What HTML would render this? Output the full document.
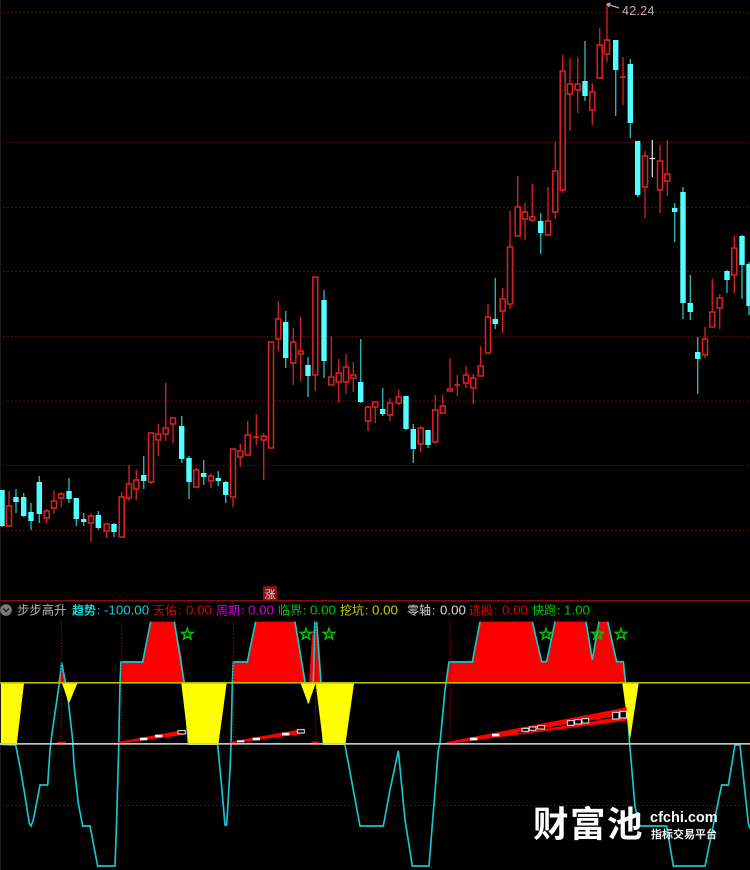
<!DOCTYPE html>
<html><head><meta charset="utf-8"><style>
html,body{margin:0;padding:0;background:#000}
svg{display:block}
text{font-family:"Liberation Sans","Noto Sans CJK SC",sans-serif}
</style></head><body>
<svg width="750" height="870" viewBox="0 0 750 870" xmlns="http://www.w3.org/2000/svg">
<rect width="750" height="870" fill="#000"/>
<rect width="1" height="870" fill="#1c1c1c"/>
<path d="M3 12.5H750M3 77.5H750M3 142.5H750M3 207.5H750M3 271.5H750M3 336.5H750M3 401H750M3 465.5H750M3 530.5H750" stroke="#760808" stroke-width="1.100" stroke-dasharray="1.700 2.300" fill="none"/>

<path fill="none" stroke="#cc2020" stroke-width="1.400" d="M9 491V527M46.7 509V523M54 490V514M61.3 492V507M91 513V542M106.7 523V538M121.7 492V537M129 465V501M136.3 470V500M151 433V484M158.3 424V456M165.7 383V441M173 418V443M196.3 468V487M211 473V488M233 449V507M240.3 444V467M247.7 421V455M256.3 414V445M263.7 433V480M271 342V448M278.3 301V351M293.3 328V385M300.7 317V381M315.3 277V391M331.3 336V385M338.7 359V403M346 354V394M353.3 362V392M368 406V431M375.3 402V423M390 398V421M398.7 390V405M420.7 426V452M435.3 395V444M442.7 395V413M450 358V391M457.3 375V396M466 366V388M473.3 374V404M480.7 346V376M488 304V353M502.7 288V333M510 211V309M517.7 176V236M525 203V240M532.3 184V222M548 187V235M555.3 142V219M562.7 55V193M570 58V131M577.7 57V113M592.3 83V125M599.7 28V78M607 4V62M623 57V105M645 151V218M660 145V213M667.3 140V196M705 327V358M712.3 279V327M719.7 294V329M734.3 236V293"/>
<path fill="#000" stroke="#e02222" stroke-width="1.500" d="M6.5 506h5v20h-5zM44.2 511h5v7h-5zM51.5 501h5v7h-5zM58.8 494h5v4h-5zM88.5 516h5v7h-5zM104.2 524h5v7h-5zM119.2 497h5v40h-5zM126.5 484h5v14h-5zM133.8 480h5v9h-5zM148.5 433h5v49h-5zM155.8 434h5v6h-5zM163.2 428h5v6h-5zM170.5 418h5v6h-5zM193.8 470h5v17h-5zM208.5 476h5v5h-5zM230.5 449h5v48h-5zM237.8 451h5v6h-5zM245.2 435h5v20h-5zM261.2 436h5v4h-5zM268.5 342h5v106h-5zM275.8 319h5v20h-5zM290.8 342h5v21h-5zM298.2 351h5v3h-5zM312.8 277h5v98h-5zM328.8 377h5v8h-5zM336.2 373h5v9h-5zM343.5 367h5v15h-5zM350.8 375h5v3h-5zM365.5 407h5v14h-5zM372.8 402h5v5h-5zM387.5 403h5v12h-5zM396.2 397h5v6h-5zM418.2 428h5v16h-5zM432.8 410h5v32h-5zM440.2 406h5v7h-5zM447.5 389h5v2h-5zM463.5 375h5v8h-5zM470.8 378h5v10h-5zM478.2 366h5v10h-5zM485.5 317h5v36h-5zM500.2 299h5v12h-5zM507.5 247h5v57h-5zM515.2 207h5v29h-5zM522.5 212h5v7h-5zM529.8 217h5v3h-5zM545.5 221h5v14h-5zM552.8 171h5v41h-5zM560.2 71h5v119h-5zM567.5 84h5v10h-5zM575.2 84h5v6h-5zM589.8 92h5v18h-5zM597.2 45h5v33h-5zM604.5 40h5v14h-5zM642.5 156h5v31h-5zM657.5 161h5v29h-5zM664.8 174h5v7h-5zM702.5 339h5v16h-5zM709.8 312h5v15h-5zM717.2 298h5v10h-5zM731.8 248h5v27h-5z"/>
<path fill="none" stroke="#e02020" stroke-width="1.800" d="M253.5 437h5.6M454.5 385h5.6M620.2 77h5.6"/>
<path fill="none" stroke="#e8e8e8" stroke-width="1.200" d="M652.3 140V177M649.5 158.500h5.600"/>

<path fill="none" stroke="#2fb0b0" stroke-width="1.400" d="M2 490V527M16 489V513M23.7 493V517M31 503V530M39.3 476V523M69 478V503M76.3 498V526M83.7 513V526M98.3 511V530M114 523V537M143.7 456V489M181.7 416V463M189 456V499M203.7 460V485M218.3 471V486M225.7 481V503M285.7 311V368M308 357V397M324 290V378M360.7 339V403M382.7 388V416M406 396V430M413.3 424V463M428 430V448M495.300 278V329M540.700 213V254M585 41V101M615.700 40V116M630.300 59V138M637.700 141V197M674.700 203V242M683 187V319M690.300 275V320M697.700 337V394M727 270V293M742 235V299M749 262V315"/>
<path fill="none" stroke="#50ffff" stroke-width="5.400" d="M2 490V526M16 497V502M23.700 497V516M31 512V521M39.300 482V514M69 491V499M76.300 498V519M83.700 519V522M98.300 515V528M114 524V532M143.700 475V481M181.700 426V459M189 458V482M203.700 473V477M218.300 478V481M225.700 482V495M285.700 322V358M308 365V376M324 300V361M360.700 382V402M382.700 409V414M406 396V429M413.300 429V449M428 430V445M495.300 319V324M540.700 221V233M585 81V96M615.700 40V70M630.300 64V123M637.700 141V195M674.700 208V212M683 192V303M690.300 303V312M697.700 352V359M727 271V280M742 236V265M749 264V306"/>

<path d="M607 4L619 8M607 4l3.500-1M607 4l2.500 3" fill="none" stroke="#b0b0b0" stroke-width="1.300"/>
<text x="622" y="15" font-size="12.500" fill="#b4b4b4" letter-spacing=".3">42.24</text>

<rect x="263" y="586" width="14" height="14" fill="#7e1414"/>
<text x="270" y="598" font-size="11" fill="#f0d0d0" text-anchor="middle">涨</text>
<rect x="0" y="600" width="750" height="1.500" fill="#8c0c0c"/>

<circle cx="6" cy="610" r="5.800" fill="#7a7a7a"/>
<path d="M3 608.500l3 3 3-3" fill="none" stroke="#222" stroke-width="1.400"/>
<g font-size="12">
<text x="17" y="614.500" fill="#b8b8b8" font-size="12.400">步步高升</text>
<text x="72" y="614.500" fill="#14d4d4" font-weight="700">趋势<tspan font-weight="400" dx="1">:</tspan></text><text x="104" y="614.500" font-size="13.300" fill="#14d4d4">-100.00</text>
<text x="153" y="614.500" fill="#e00000">天佑<tspan dx="1">:</tspan></text><text x="186" y="614.500" font-size="13.300" fill="#e00000">0.00</text>
<text x="216" y="614.500" fill="#d800d8">周期<tspan dx="1">:</tspan></text><text x="248" y="614.500" font-size="13.300" fill="#d800d8">0.00</text>
<text x="278" y="614.500" fill="#00c800">临界<tspan dx="1">:</tspan></text><text x="310" y="614.500" font-size="13.300" fill="#00c800">0.00</text>
<text x="340" y="614.500" fill="#d0d000">挖坑<tspan dx="1">:</tspan></text><text x="372" y="614.500" font-size="13.300" fill="#d0d000">0.00</text>
<text x="407" y="614.500" fill="#d8d8d8">零轴<tspan dx="1">:</tspan></text><text x="440" y="614.500" font-size="13.300" fill="#d8d8d8">0.00</text>
<text x="469" y="614.500" fill="#e00000">选股<tspan dx="1">:</tspan></text><text x="502" y="614.500" font-size="13.300" fill="#e00000">0.00</text>
<text x="532" y="614.500" fill="#00c800">快跑<tspan dx="1">:</tspan></text><text x="564" y="614.500" font-size="13.300" fill="#00c800">1.00</text>
</g>

<path d="M3 805.500H77M120 805.500H355M390 805.500H745" stroke="#760808" stroke-width="1.100" stroke-dasharray="1.700 2.300" fill="none"/>

<g transform="translate(0,590) scale(.33333)">
<path fill="#ff0000" d="M172 280L178 260L185 218L195 280ZM360 280L363 216H428L452 95H523L545 200L553 280ZM695 280L698 216H742L767 95H885L915 280ZM927 280L935 150L943 95H950L962 280Z"/>
<g fill="none" stroke="#16c8cc" stroke-width="5">
<polyline points="0,463 47,465 60,530 72,600 88,700 93,708 100,690 120,585 143,585 150,480 156,430 178,280 185,218 195,270 205,335 218,450 222,525 235,640 248,708 270,708 293,828 345,828 350,690 356,480 360,280 363,216 428,216 452,95"/>
<polyline points="523,95 553,280 565,465"/>
<polyline points="653,465 665,590 675,705 680,705 690,540 693,465 697,280 700,216 742,216 767,95"/>
<polyline points="885,95 915,275 925,340 940,275 945,95"/>
<polyline points="950,95 963,280 970,465"/>
<polyline points="1035,465 1080,708 1125,708"/>
</g>
<path fill="#ffff00" d="M3 280H72L50 465H3ZM186 280H232L207 340ZM544 280H680L655 465H566ZM902 280H947L925 342ZM947 280H1062L1036 465H970Z"/>
<path d="M184 95V460M365 95V460M700 95V460M947 95V460" stroke="#b00000" stroke-width="3" stroke-dasharray="4 5" fill="none"/>
<path fill="#ff0000" d="M172 455h25v5h-25zM935 455h23v5h-23zM354 456L556 419V434L354 461ZM688 456L913 416V431L688 461Z"/>
<g fill="#fff">
<rect x="420" y="443" width="22" height="8"/><rect x="465" y="434" width="22" height="8"/>
<rect x="711" y="451" width="22" height="6"/><rect x="758" y="443" width="22" height="8"/><rect x="846" y="428" width="22" height="8"/>
</g>
<g fill="#000" stroke="#e8e8e8" stroke-width="3">
<rect x="534" y="422" width="22" height="10"/><rect x="892" y="419" width="21" height="10"/>
</g>
<g fill="none" stroke="#00c000" stroke-width="4.500">
<polygon id="s" points="562,115 566,127 579,127 569,135 573,147 562,140 551,147 555,135 545,127 558,127"/>
<polygon points="918,115 922,127 935,127 925,135 929,147 918,140 907,147 911,135 901,127 914,127"/>
<polygon points="987,115 991,127 1004,127 994,135 998,147 987,140 976,147 980,135 970,127 983,127"/>
</g>
</g>

<g transform="translate(375,590) scale(.33333)">
<path fill="#ff0000" d="M212 280L225 216H292L315 95H472L500 215H515L540 95H633L652 210L672 95H698L725 215H745L752 280Z"/>
<g fill="none" stroke="#16c8cc" stroke-width="5">
<polyline points="0,708 25,708 45,600 70,482 90,690 112,828 162,828 190,480 195,460 210,300 222,216 292,216 315,95"/>
<polyline points="472,95 500,215 515,215 540,95"/>
<polyline points="633,95 652,210 672,95"/>
<polyline points="698,95 725,215 745,215 752,280 763,450 780,650 795,708 875,708 895,828 990,828 1040,585 1060,585 1080,465 1095,465 1120,700 1125,715"/>
</g>
<path fill="#ffff00" d="M742 280H791L765 450Z"/>
<path d="M226 95V460" stroke="#b00000" stroke-width="3" stroke-dasharray="4 5" fill="none"/>
<path fill="#ff0000" d="M215 456L755 352V392L215 462Z"/>
<path d="M430 428L720 381" stroke="#000" stroke-width="3.500" fill="none"/>
<g fill="#fff"><rect x="285" y="443" width="22" height="8"/><rect x="351" y="431" width="22" height="8"/></g>
<g fill="#000" stroke="#e8e8e8" stroke-width="3">
<rect x="441" y="415" width="20" height="9"/><rect x="463" y="411" width="20" height="10"/><rect x="488" y="407" width="21" height="10"/>
<rect x="577" y="392" width="20" height="14"/><rect x="599" y="389" width="20" height="13"/><rect x="621" y="386" width="20" height="13"/>
<rect x="713" y="367" width="19" height="20"/><rect x="735" y="364" width="19" height="20"/>
</g>
<g fill="none" stroke="#00c000" stroke-width="4.500">
<polygon points="513,115 517,127 530,127 520,135 524,147 513,140 502,147 506,135 496,127 509,127"/>
<polygon points="668,115 672,127 685,127 675,135 679,147 668,140 657,147 661,135 651,127 664,127"/>
<polygon points="738,115 742,127 755,127 745,135 749,147 738,140 727,147 731,135 721,127 734,127"/>
</g>
</g>

<rect x="0" y="682" width="750" height="1.600" fill="#bcbc00"/>
<rect x="0" y="743" width="750" height="1.700" fill="#c4c4c4"/>

<text x="533" y="836.500" font-size="35.500" font-weight="700" fill="#fff" style="letter-spacing:1.500px">财富池</text>
<text x="650" y="822" font-size="14.500" font-weight="700" fill="#fff">cfchi.com</text>
<text x="651" y="838" font-size="11" font-weight="700" fill="#f0f0f0">指标交易平台</text>
</svg>
</body></html>
